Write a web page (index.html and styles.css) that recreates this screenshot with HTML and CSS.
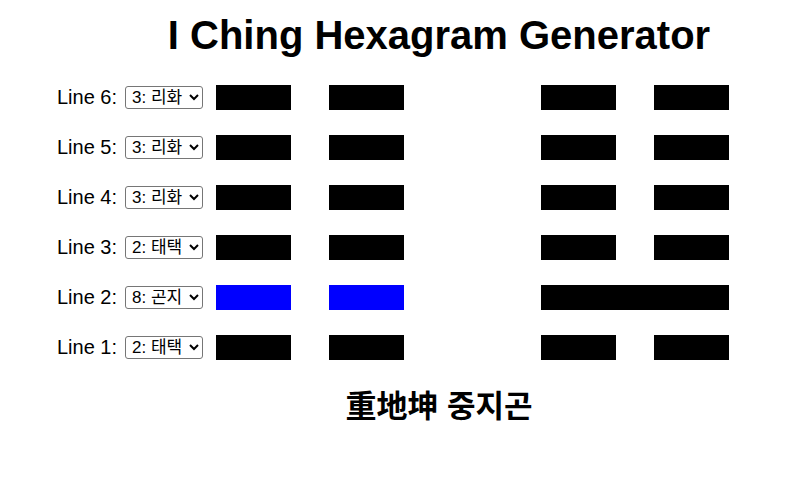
FILE: index.html
```html
<!DOCTYPE html>
<html lang="ko">
<head>
    <meta charset="UTF-8">
    <meta name="viewport" content="width=device-width, initial-scale=1.0">
    <title>I Ching Hexagram Generator</title>
    <link rel="stylesheet" href="styles.css">
</head>
<body>

    <div class="app">
        <h1>I Ching Hexagram Generator</h1>

        <!-- Lines are listed top (6) to bottom (1) -->
        <div class="lines">
            <div class="row">
                <label class="line-label">Line 6:</label>
                <select class="line-select">
                    <option>1: 건천</option><option>2: 태택</option><option selected>3: 리화</option><option>4: 진뢰</option>
                    <option>5: 손풍</option><option>6: 감수</option><option>7: 간산</option><option>8: 곤지</option>
                </select>
                <div class="line yin"><span class="bar"></span><span class="bar"></span></div>
                <div class="line yin"><span class="bar"></span><span class="bar"></span></div>
            </div>
            <div class="row">
                <label class="line-label">Line 5:</label>
                <select class="line-select">
                    <option>1: 건천</option><option>2: 태택</option><option selected>3: 리화</option><option>4: 진뢰</option>
                    <option>5: 손풍</option><option>6: 감수</option><option>7: 간산</option><option>8: 곤지</option>
                </select>
                <div class="line yin"><span class="bar"></span><span class="bar"></span></div>
                <div class="line yin"><span class="bar"></span><span class="bar"></span></div>
            </div>
            <div class="row">
                <label class="line-label">Line 4:</label>
                <select class="line-select">
                    <option>1: 건천</option><option>2: 태택</option><option selected>3: 리화</option><option>4: 진뢰</option>
                    <option>5: 손풍</option><option>6: 감수</option><option>7: 간산</option><option>8: 곤지</option>
                </select>
                <div class="line yin"><span class="bar"></span><span class="bar"></span></div>
                <div class="line yin"><span class="bar"></span><span class="bar"></span></div>
            </div>
            <div class="row">
                <label class="line-label">Line 3:</label>
                <select class="line-select">
                    <option>1: 건천</option><option selected>2: 태택</option><option>3: 리화</option><option>4: 진뢰</option>
                    <option>5: 손풍</option><option>6: 감수</option><option>7: 간산</option><option>8: 곤지</option>
                </select>
                <div class="line yin"><span class="bar"></span><span class="bar"></span></div>
                <div class="line yin"><span class="bar"></span><span class="bar"></span></div>
            </div>
            <div class="row">
                <label class="line-label">Line 2:</label>
                <select class="line-select">
                    <option>1: 건천</option><option>2: 태택</option><option>3: 리화</option><option>4: 진뢰</option>
                    <option>5: 손풍</option><option>6: 감수</option><option>7: 간산</option><option selected>8: 곤지</option>
                </select>
                <!-- changing line: shown in blue, flips in the second hexagram -->
                <div class="line yin changing"><span class="bar"></span><span class="bar"></span></div>
                <div class="line yang"><span class="bar"></span></div>
            </div>
            <div class="row">
                <label class="line-label">Line 1:</label>
                <select class="line-select">
                    <option>1: 건천</option><option selected>2: 태택</option><option>3: 리화</option><option>4: 진뢰</option>
                    <option>5: 손풍</option><option>6: 감수</option><option>7: 간산</option><option>8: 곤지</option>
                </select>
                <div class="line yin"><span class="bar"></span><span class="bar"></span></div>
                <div class="line yin"><span class="bar"></span><span class="bar"></span></div>
            </div>
        </div>

        <div class="result">重地坤 중지곤</div>
    </div>

</body>
</html>
```

FILE: styles.css
```css
body {
    margin: 0;
    font-family: "Liberation Sans", Arial, "Noto Sans CJK KR", sans-serif;
    background-color: #fff;
    color: #000;
}
.app {
    padding-top: 12px;
}
h1 {
    margin: 0 0 27px;
    padding-left: 76px;
    font-size: 40px;
    line-height: 46px;
    text-align: center;
}
/* Line rows */
.lines {
    display: flex;
    flex-direction: column;
    gap: 25px;
    padding-left: 57px;
}
.row {
    display: flex;
    align-items: center;
    height: 25px;
}
.line-label {
    font-size: 20px;
    margin-right: 8px;
}
.line-select {
    box-sizing: border-box;
    width: 78px;
    height: 23px;
    padding: 0 0 0 2px;
    margin-right: 13px;
    font-family: "Liberation Sans", Arial, "Noto Sans CJK KR", sans-serif;
    font-size: 17px;
    border: 1px solid #767676;
    border-radius: 3px;
    background-color: #fff;
    color: #000;
}
.line {
    display: flex;
    justify-content: space-between;
    width: 188px;
    height: 25px;
}
.line + .line {
    margin-left: 137px;
}
.bar {
    display: block;
    height: 25px;
    background-color: #000;
}
.yin .bar {
    width: 75px;
}
.yang .bar {
    width: 100%;
}
.changing .bar {
    background-color: #00f;
}
.result {
    margin-top: 31px;
    padding-left: 76px;
    text-align: center;
    font-size: 31px;
    font-weight: bold;
    line-height: 32px;
}
```
